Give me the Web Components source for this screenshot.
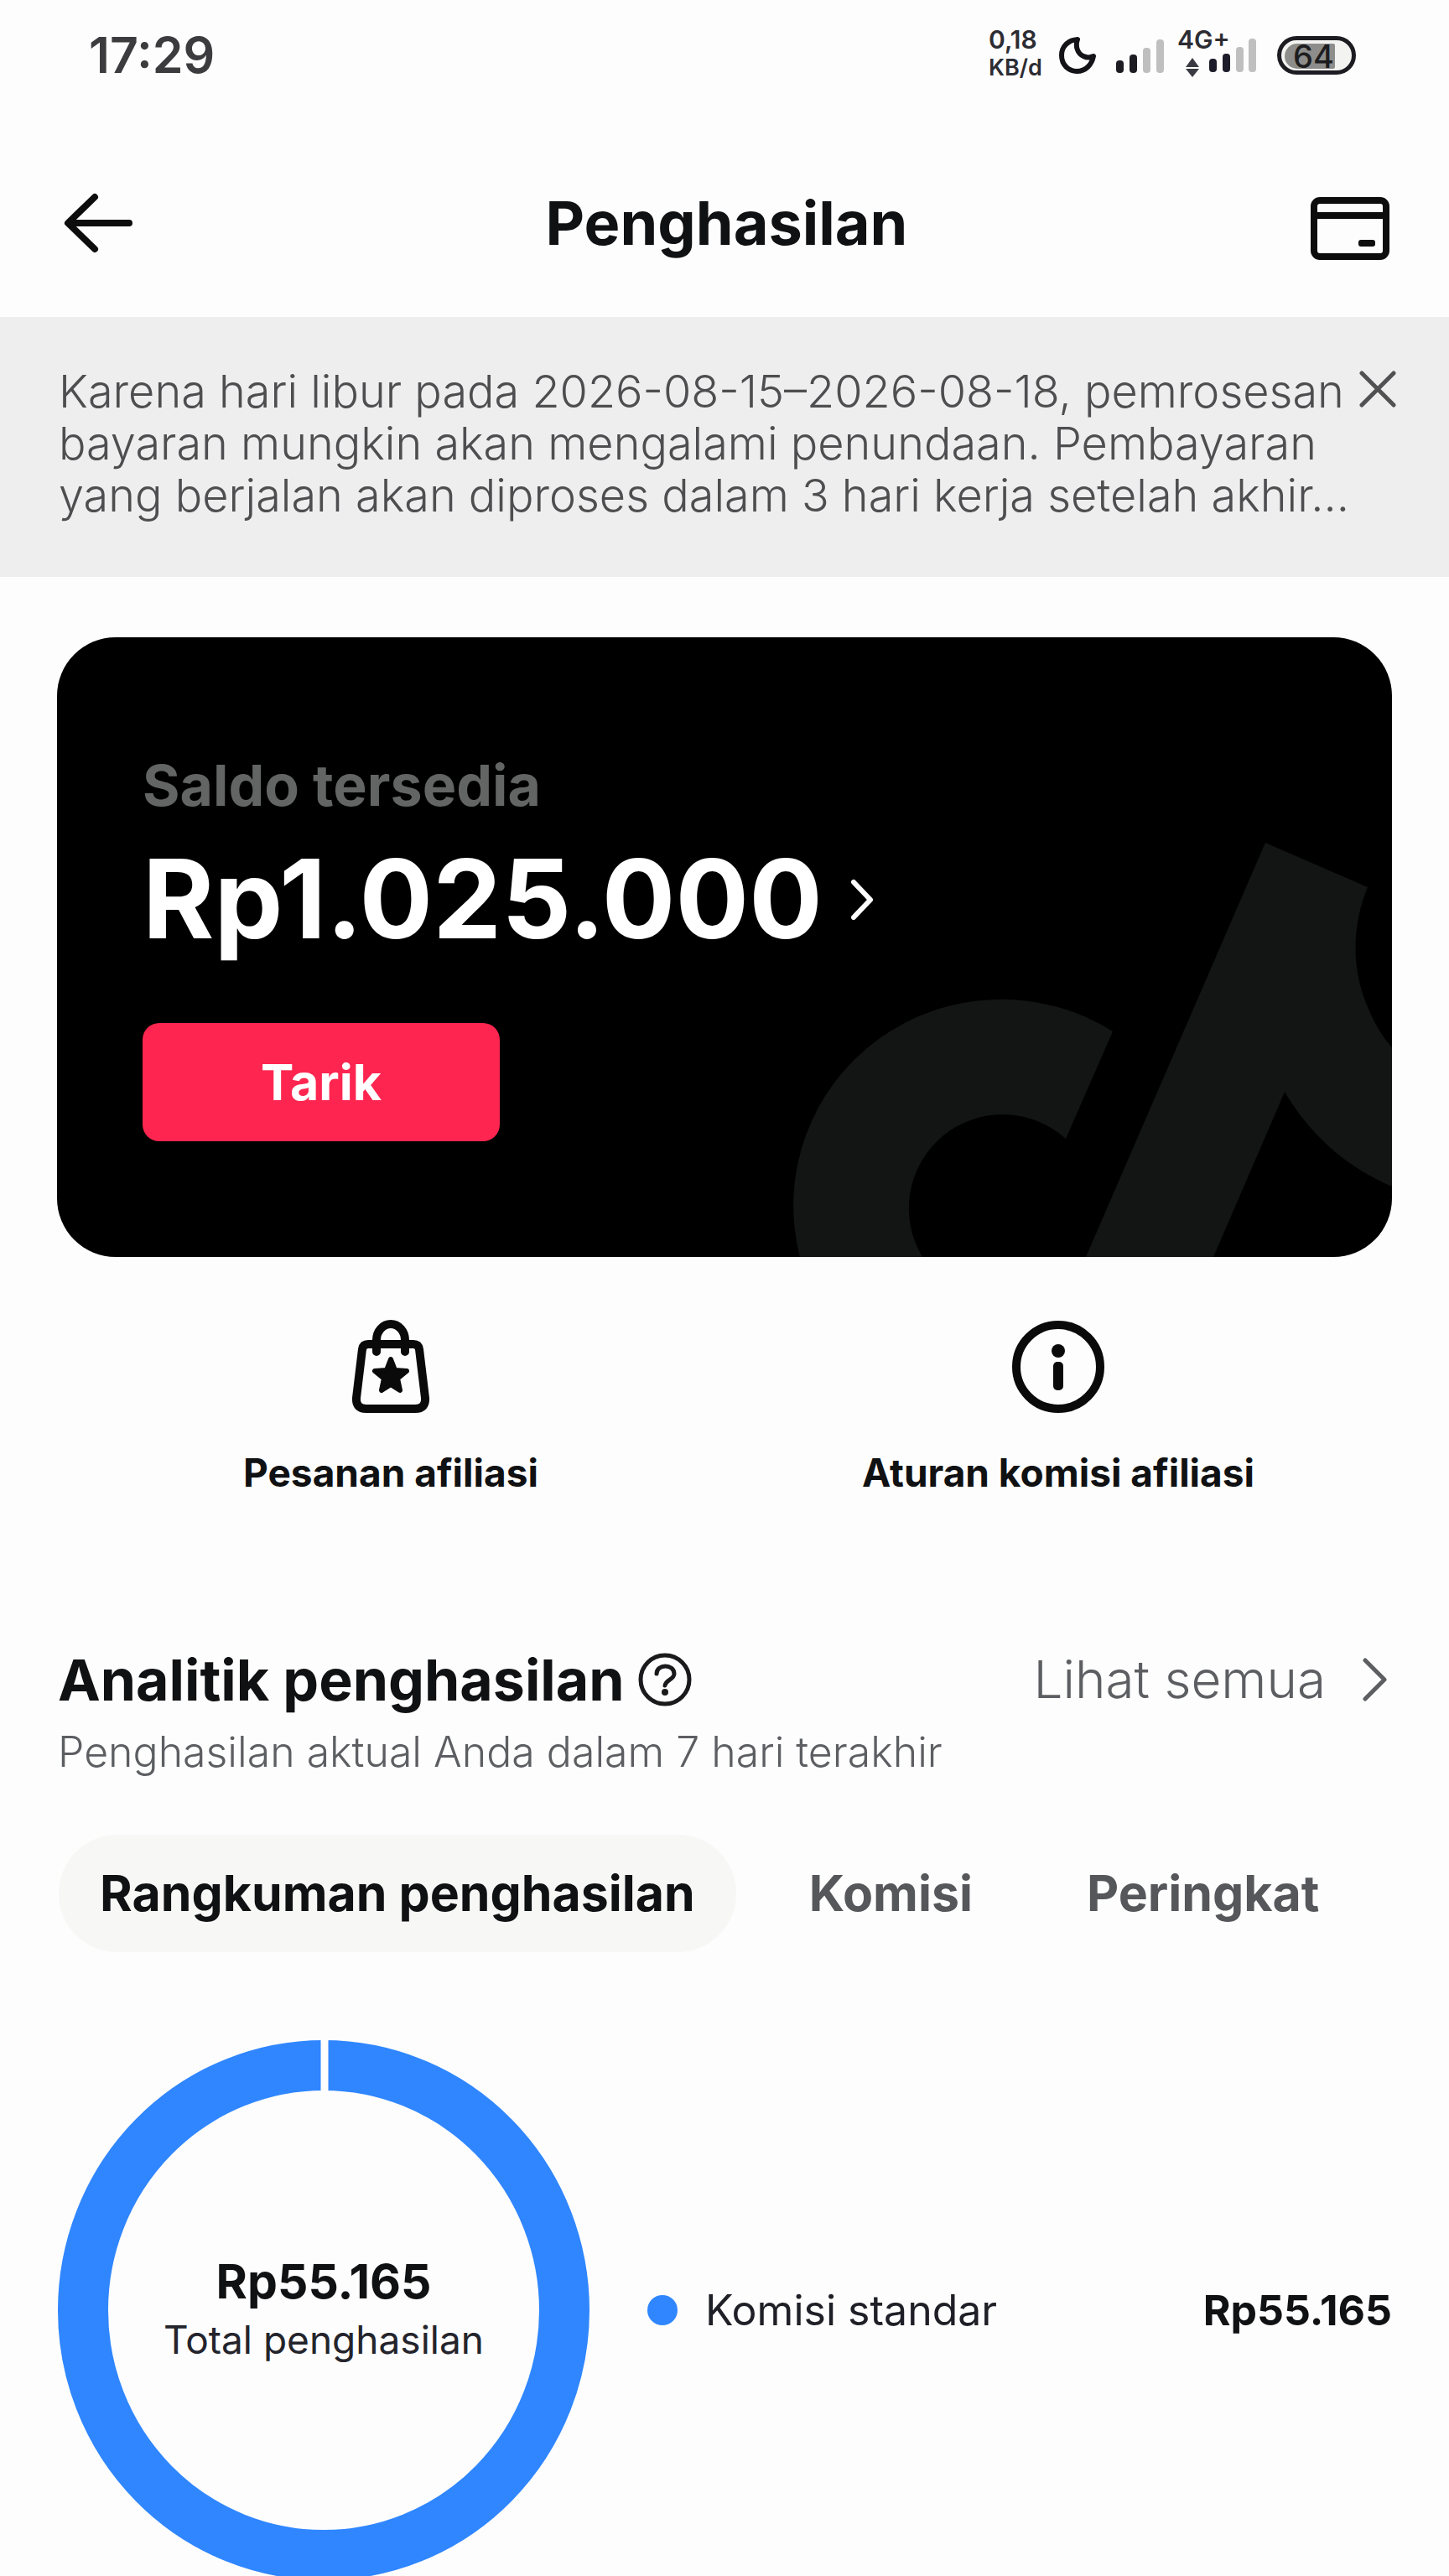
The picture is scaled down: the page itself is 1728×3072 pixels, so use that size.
<!DOCTYPE html>
<html lang="id">
<head>
<meta charset="utf-8">
<meta name="viewport" content="width=device-width, initial-scale=1">
<title>Penghasilan</title>
<style>
  html, body { margin: 0; height: 100%; }
  body {
    --ink: #101113;
    --muted: #5c5e62;
    --gutter: 68px;
    background: #fdfdfd;
    color: var(--ink);
    font-family: Inter, "Liberation Sans", sans-serif;
  }
</style>
</head>
<body>

<earnings-app></earnings-app>

<script>
/* Base class: clones a template with shared resets into an open shadow root. */
class ShadowElement extends HTMLElement {
  constructor() {
    super();
    const tpl = document.createElement('template');
    tpl.innerHTML = `<style>
      *, *::before { box-sizing: border-box; }
      h1, h2, p { margin: 0; }
      button, a { font: inherit; color: inherit; text-decoration: none; }
      button { border: 0; padding: 0; background: none; cursor: pointer; }
      svg { display: block; flex: none; }
      </style>` + this.constructor.markup;
    this.attachShadow({ mode: 'open' }).append(tpl.content.cloneNode(true));
  }
}

customElements.define('status-bar', class extends ShadowElement {
  static markup = `
    <style>
      :host { display: flex; justify-content: space-between; align-items: center; height: 132px; padding: 0 111px 0 106px; }
      time { font-size: 59px; font-weight: 600; line-height: 60px; color: #3c3c3f; }
      .tray { display: flex; align-items: center; gap: 16px; font-weight: 600; color: #2c2c33; }
      .rate { width: 67px; padding-bottom: 4px; font-size: 30px; line-height: 34px; }
      .rate small { display: block; font-size: 27px; }
      .mobile { display: grid; font-size: 30px; line-height: 28px; }
      .mobile > * { grid-area: 1 / 1; }
      .battery { display: grid; align-items: center; width: 94px; height: 46px; border: 5px solid #1c1c22; border-radius: 23px;
        font-size: 38px; font-weight: 500; line-height: 38px; color: #1d1d1f; background: #f3f3f2; }
      .battery > * { grid-area: 1 / 1; }
      .battery span { padding-left: 14px; }
      .level { width: 60px; height: 30px; margin-left: 4px; background: #8d8d8b; border-radius: 15px 2px 2px 15px; }
    </style>
    <time>17:29</time>
    <div class="tray">
      <div class="rate">0,18<small>KB/d</small></div>
      <svg width="53" height="46" viewBox="0 0 53 46" fill="none" stroke="#131318" stroke-width="6" stroke-linejoin="round">
        <path d="M23 4C11 5 4 13 4 23c0 11 8 19 18 19 11 0 18-8 20-18-4 2-8 2-12 0-7-3-10-12-7-20z"/>
      </svg>
      <svg width="57" height="46" viewBox="0 0 57 46">
        <g fill="#1c1c22"><rect y="29" width="9" height="15" rx="4"/><rect x="16" y="22" width="9" height="22" rx="4"/></g>
        <g fill="#bfbfbf"><rect x="32" y="14" width="9" height="30" rx="4"/><rect x="48" y="4" width="9" height="40" rx="4"/></g>
      </svg>
      <div class="mobile">
        <svg width="103" height="66" viewBox="0 0 103 66">
          <path fill="#3a3a42" d="M18 36l8 11H10zM18 59l8-10H10z"/>
          <g fill="#1c1c2a"><rect x="38" y="37" width="9" height="16" rx="4"/><rect x="54" y="31" width="9" height="22" rx="4"/></g>
          <g fill="#bfbfbf"><rect x="70" y="23" width="9" height="30" rx="4"/><rect x="85" y="13" width="9" height="40" rx="4"/></g>
        </svg>
        <span>4G+</span>
      </div>
      <div class="battery"><i class="level"></i><span>64</span></div>
    </div>`;
});

customElements.define('page-header', class extends ShadowElement {
  static markup = `
    <style>
      :host { display: grid; grid-template-columns: 1fr auto 1fr; align-items: center; height: 246px; padding: 22px 71px 0 76px; }
      h1 { font-size: 72px; font-weight: 700; line-height: 88px; }
      .wallet { justify-self: end; }
      button { justify-self: start; }
    </style>
    <button aria-label="Kembali">
      <svg width="84" height="72" viewBox="0 0 84 72" fill="none" stroke="#0d0d0e" stroke-width="8" stroke-linecap="round" stroke-linejoin="round">
        <path d="M37 5L5 36l32 31M6 36h72"/>
      </svg>
    </button>
    <h1><slot></slot></h1>
    <button class="wallet" aria-label="Metode pembayaran">
      <svg width="94" height="88" viewBox="0 -12 94 88" fill="none" stroke="#0d0d0e" stroke-width="8">
        <rect x="4" y="5" width="86" height="67" rx="7"/>
        <path d="M4 23h86"/>
        <rect x="57" y="52" width="20" height="8" rx="3" fill="#0d0d0e" stroke="none"/>
      </svg>
    </button>`;
});

customElements.define('notice-banner', class extends ShadowElement {
  static markup = `
    <style>
      :host { display: flex; align-items: flex-start; padding: 58px 63px 66px 70px; background: #eeeeee; }
      p { flex: 1; font-size: 54px; font-weight: 300; line-height: 62px; color: #4e4e50; }
      button { margin-top: 6px; }
    </style>
    <p><slot></slot></p>
    <button aria-label="Tutup">
      <svg width="44" height="44" viewBox="0 0 44 44" stroke="#515153" stroke-width="5" stroke-linecap="round">
        <path d="M3 3l38 38M41 3L3 41"/>
      </svg>
    </button>`;
});

customElements.define('balance-card', class extends ShadowElement {
  static markup = `
    <style>
      :host { display: block; position: relative; overflow: hidden; margin: 72px var(--gutter) 0; padding: 134px 102px 138px;
        border-radius: 70px; background: #000; color: #fff; }
      .mark { position: absolute; right: 0; bottom: 0; }
      .content { position: relative; display: flex; flex-direction: column; align-items: flex-start; }
      p { font-size: 68px; font-weight: 700; line-height: 84px; color: #636565; }
      .amount { display: flex; align-items: center; gap: 32px; margin: 16px 0 70px; font-size: 130px; font-weight: 700; line-height: 156px; }
      button { width: 426px; height: 141px; border-radius: 20px; background: #fe2650; font-size: 59px; font-weight: 700; }
    </style>
    <svg class="mark" width="720" height="500" viewBox="0 0 720 500" fill="#131514" aria-hidden="true">
      <path d="M569 6l122 53C672 105 670 160 695 211q10 23 25 39v166c-60-26-100-66-128-113l-85 197H355z"/>
      <path d="M14 500A248 246 0 0 1 387 231L331 359A112 112 0 0 0 160 500z"/>
    </svg>
    <div class="content">
      <p><slot name="label"></slot></p>
      <a class="amount" href="#saldo"><slot name="amount"></slot>
        <svg width="30" height="50" viewBox="0 0 30 50" fill="none" stroke="#fff" stroke-width="6" stroke-linecap="round" stroke-linejoin="round"><path d="M5 5l20 21L5 47"/></svg>
      </a>
      <button><slot name="action"></slot></button>
    </div>`;
});

customElements.define('shortcut-link', class extends ShadowElement {
  static markup = `
    <style>
      :host { display: block; flex: 1; }
      a { display: flex; flex-direction: column; align-items: center; gap: 40px; font-size: 46px; font-weight: 700; line-height: 60px; }
    </style>
    <a href="#pintasan"><slot name="icon"></slot><span><slot></slot></span></a>`;
});

customElements.define('section-heading', class extends ShadowElement {
  static markup = `
    <style>
      :host { display: grid; grid-template-columns: 1fr auto; row-gap: 14px; padding: 0 73px 0 69px; color: var(--muted); }
      .title { display: flex; align-items: center; gap: 16px; color: var(--ink); }
      h2 { font-size: 68px; font-weight: 700; line-height: 84px; }
      .more { display: flex; align-items: center; gap: 44px; font-size: 62px; font-weight: 300; line-height: 84px; }
      p { font-size: 50px; font-weight: 300; line-height: 60px; }
    </style>
    <div class="title">
      <h2><slot></slot></h2>
      <button aria-label="Bantuan">
        <svg width="64" height="64" viewBox="0 0 64 64" fill="none" stroke="#1a1a1c" stroke-width="5" stroke-linecap="round">
          <circle cx="32" cy="32" r="29"/>
          <path d="M22 25c0-12 21-12 21 0 0 7-10 7-11 14"/>
          <circle cx="32" cy="47" r="4" fill="#1a1a1c" stroke="none"/>
        </svg>
      </button>
    </div>
    <a class="more" href="#semua"><slot name="more"></slot>
      <svg width="30" height="52" viewBox="0 0 30 52" fill="none" stroke="#5c5e62" stroke-width="5" stroke-linecap="round" stroke-linejoin="round"><path d="M3 3l23 23L3 49"/></svg>
    </a>
    <p><slot name="note"></slot></p>`;
});

customElements.define('pill-tab', class extends ShadowElement {
  static markup = `
    <style>
      :host { display: block; }
      button { height: 140px; padding: 0 49px 2px; border-radius: 70px; font-size: 59px; font-weight: 700; color: #56575a; }
      :host([selected]) button { background: #f7f7f6; color: var(--ink); }
    </style>
    <button role="tab"><slot></slot></button>`;
});

customElements.define('donut-chart', class extends ShadowElement {
  static markup = `
    <style>
      :host { display: grid; place-items: center; flex: none; }
      svg, .centre { grid-area: 1 / 1; }
      .centre { text-align: center; font-size: 46px; line-height: 68px; color: #24242c; }
      strong { display: block; font-size: 57px; font-weight: 700; line-height: 70px; color: var(--ink); }
    </style>
    <svg width="636" height="644" viewBox="0 0 636 644" aria-hidden="true">
      <ellipse cx="318" cy="322" rx="287" ry="292" fill="none" stroke="#2f86ff" stroke-width="60"/>
      <path d="M319 0v64" stroke="#fdfdfd" stroke-width="9"/>
    </svg>
    <div class="centre"><strong><slot name="value"></slot></strong><slot></slot></div>`;
});

customElements.define('legend-row', class extends ShadowElement {
  static markup = `
    <style>
      :host { display: flex; align-items: center; gap: 33px; flex: 1; font-size: 50px; line-height: 60px; color: #1f1f27; }
      :host::before { content: ""; flex: none; width: 36px; height: 36px; border-radius: 50%; background: #2f86ff; }
      strong { margin-left: auto; font-weight: 700; color: var(--ink); }
    </style>
    <span><slot></slot></span><strong><slot name="value"></slot></strong>`;
});

customElements.define('earnings-app', class extends ShadowElement {
  static markup = `
    <style>
      :host { display: block; height: 100vh; overflow-y: auto; scrollbar-width: none; }
      .shortcuts { display: flex; padding: 75px var(--gutter) 175px; }
      .tabs { display: flex; gap: 38px; padding: 69px 70px 105px; }
      .summary { display: flex; align-items: center; gap: 68px; padding: 0 var(--gutter); }
    </style>
    <status-bar></status-bar>
    <page-header>Penghasilan</page-header>
    <notice-banner>Karena hari libur pada 2026-08-15–2026-08-18, pemrosesan bayaran mungkin akan mengalami penundaan. Pembayaran yang berjalan akan diproses dalam 3 hari kerja setelah akhir...</notice-banner>
    <main>
      <balance-card>
        <span slot="label">Saldo tersedia</span>
        <span slot="amount">Rp1.025.000</span>
        <span slot="action">Tarik</span>
      </balance-card>
      <nav class="shortcuts">
        <shortcut-link>
          <svg slot="icon" width="112" height="112" viewBox="0 0 112 112" fill="none" stroke="#0a0a0b" stroke-width="10" stroke-linecap="round" stroke-linejoin="round">
            <path d="M29 29h54q6 0 7 6l7 58q1 13-12 13H27q-13 0-12-13l7-58q1-6 7-6z"/>
            <path d="M39 38V24a17 19 0 0 1 34 0v14"/>
            <path fill="#0a0a0b" stroke-width="6" d="M56 47l5 13 14 1-11 9 3 14-11-7-11 7 3-14-11-9 14-1z"/>
          </svg>
          Pesanan afiliasi
        </shortcut-link>
        <shortcut-link>
          <svg slot="icon" width="112" height="112" viewBox="0 0 112 112" fill="#0a0a0b">
            <circle cx="56" cy="56" r="50" fill="none" stroke="#0a0a0b" stroke-width="10"/>
            <circle cx="56" cy="37" r="8"/>
            <rect x="50" y="50" width="12" height="34" rx="5"/>
          </svg>
          Aturan komisi afiliasi
        </shortcut-link>
      </nav>
      <section-heading>Analitik penghasilan<span slot="more">Lihat semua</span><span slot="note">Penghasilan aktual Anda dalam 7 hari terakhir</span></section-heading>
      <div class="tabs" role="tablist">
        <pill-tab selected>Rangkuman penghasilan</pill-tab>
        <pill-tab>Komisi</pill-tab>
        <pill-tab>Peringkat</pill-tab>
      </div>
      <section class="summary">
        <donut-chart><span slot="value">Rp55.165</span>Total penghasilan</donut-chart>
        <legend-row>Komisi standar<span slot="value">Rp55.165</span></legend-row>
      </section>
    </main>`;
});
</script>
</body>
</html>
